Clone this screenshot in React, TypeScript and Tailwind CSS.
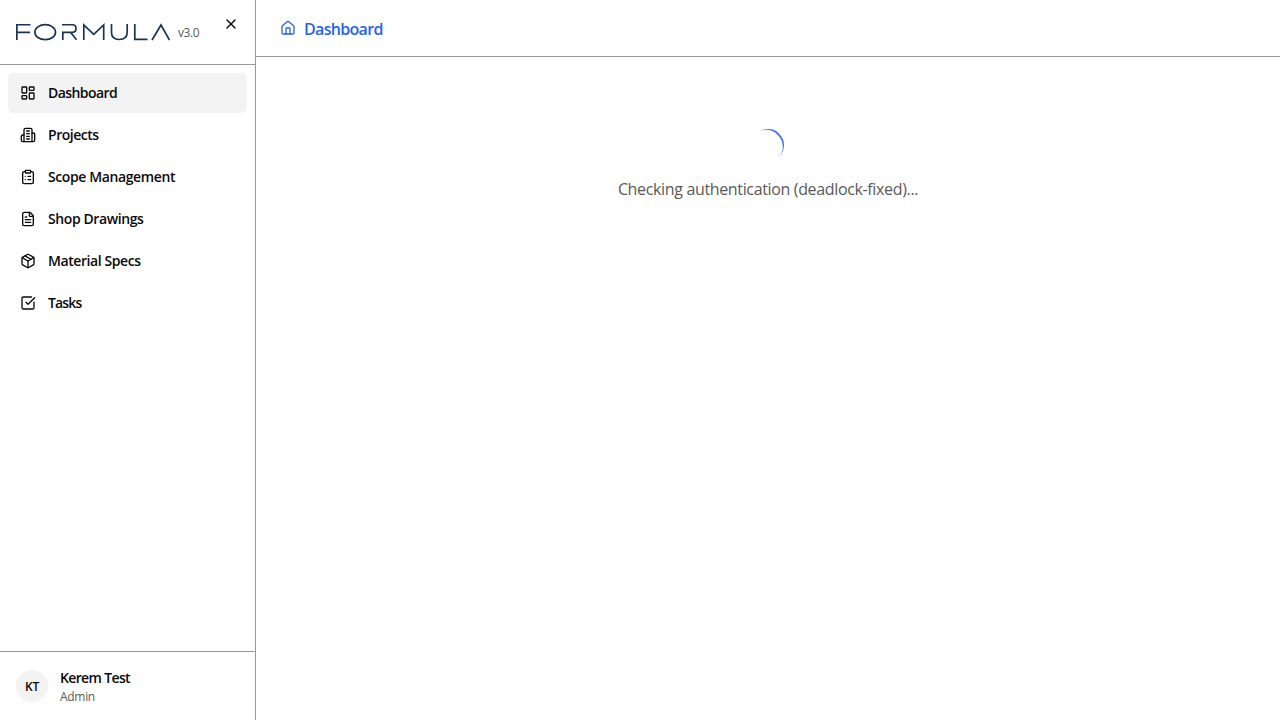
import { ClipboardList, FileText, House, LayoutDashboard, Package, SquareCheckBig, X } from "lucide-react";

function Building({ size = 16 }: { size?: number }) {
  return (
    <svg width={size} height={size} viewBox="0 0 24 24" fill="none" stroke="currentColor" strokeWidth="2" strokeLinecap="round" strokeLinejoin="round">
      <path d="M6 22V4a2 2 0 0 1 2-2h8a2 2 0 0 1 2 2v18Z" />
      <path d="M6 12H4a2 2 0 0 0-2 2v6a2 2 0 0 0 2 2h2" />
      <path d="M18 9h2a2 2 0 0 1 2 2v9a2 2 0 0 1-2 2h-2" />
      <path d="M10 6h4M10 10h4M10 14h4M10 18h4" />
    </svg>
  );
}

const items = [
  { label: "Dashboard", icon: LayoutDashboard, tracking: "tracking-[-0.57px]", active: true },
  { label: "Projects", icon: Building, tracking: "tracking-[-0.47px]" },
  { label: "Scope Management", icon: ClipboardList, tracking: "tracking-[-0.39px]" },
  { label: "Shop Drawings", icon: FileText, tracking: "tracking-[-0.4px]" },
  { label: "Material Specs", icon: Package, tracking: "tracking-[-0.42px]" },
  { label: "Tasks", icon: SquareCheckBig, tracking: "tracking-[-0.85px]" },
];

function Logo() {
  return (
    <svg width="154" height="18" viewBox="0 0 154 18" fill="none" stroke="#1c3350" strokeWidth="1.7" role="img" aria-label="Formula">
      <path d="M14.5 1.75H.85V17M.85 9.3H14" />
      <ellipse cx="29.2" cy="9.2" rx="10.3" ry="7.5" />
      <path d="M46 1.75H56.5Q60 1.75 60 5.5T56.5 9.3H46.8V17M54.5 9.3 60.5 16.8" />
      <path d="M67.8 17V2L77.7 11.3 87.7 2V17" />
      <path d="M95.5 1V9.5Q95.5 16.5 103.3 16.5T111.2 9.5V1" />
      <path d="M118.8 1V16.4H131.5" />
      <path d="M136 17 145 2 153.5 17" />
    </svg>
  );
}

export default function App() {
  return (
    <div className="flex h-screen overflow-hidden bg-white font-['Open_Sans',sans-serif] text-[#0a0a0a]">
      <aside className="flex w-64 shrink-0 flex-col border-r border-[#999999]">
        <div className="flex h-[65px] shrink-0 justify-between border-b border-[#999999] px-4">
          <div className="flex h-16 items-center gap-2">
            <Logo />
            <span className="pt-0.5 text-xs tracking-[-0.4px] text-[#595959]">v3.0</span>
          </div>
          <button className="mt-4 flex size-4 items-center justify-center" aria-label="Close">
            <X size={16} />
          </button>
        </div>
        <nav className="flex flex-1 flex-col gap-0.5 p-2">
          {items.map(({ label, icon: Icon, tracking, active }) => (
            <a key={label} className={`flex h-10 items-center gap-3 rounded-md px-3 text-sm font-semibold ${active ? "bg-[#f3f3f3]" : ""}`}>
              <Icon size={16} />
              <span className={tracking}>{label}</span>
            </a>
          ))}
        </nav>
        <div className="flex h-[69px] items-center gap-3 border-t border-[#999999] px-4">
          <div className="flex size-8 items-center justify-center rounded-full bg-[#f3f3f3] pt-0.5 text-xs font-semibold tracking-[-0.2px]">KT</div>
          <div className="pt-px">
            <div className="text-sm font-semibold tracking-[-0.65px]">Kerem Test</div>
            <div className="text-xs leading-[17px] tracking-[-0.3px] text-[#595959]">Admin</div>
          </div>
        </div>
      </aside>
      <main className="flex flex-1 flex-col">
        <header className="flex h-[57px] items-center gap-2 border-b border-[#999999] px-6 text-[#2563eb]">
          <House size={16} />
          <span className="pt-px text-base font-semibold tracking-[-0.68px]">Dashboard</span>
        </header>
        <div className="flex flex-col items-center pt-[72px]">
          <div className="size-8 -rotate-[129deg] rounded-full border-b-2 border-[#2563eb] opacity-85" />
          <p className="mt-4 text-base tracking-[-0.35px] text-[#595959]">Checking authentication (deadlock-fixed)...</p>
        </div>
      </main>
    </div>
  );
}
